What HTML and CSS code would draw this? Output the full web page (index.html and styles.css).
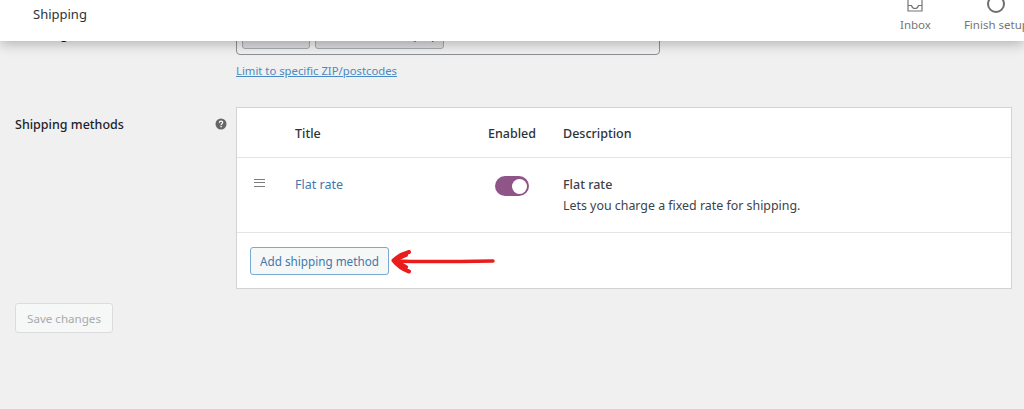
FILE: index.html
```html
<!DOCTYPE html>
<html lang="en">
<head>
<meta charset="utf-8">
<title>Shipping</title>
<link rel="stylesheet" href="styles.css">
</head>
<body>
<header class="topbar">
  <h1 class="page-title">Shipping</h1>
  <nav class="activity">
    <div class="activity-item inbox">
      <svg class="activity-icon" width="16" height="12" viewBox="0 0 16 12"><path d="M1 0V11H15V0M1 5.500H4.500C5 7.500 6 8.500 8 8.500S11 7.500 11.500 5.500H15" fill="none" stroke="#757575" stroke-width="1.200"/></svg>
      <span>Inbox</span>
    </div>
    <div class="activity-item setup">
      <svg class="activity-icon" width="18" height="13" viewBox="0 0 18 13"><circle cx="9" cy="4" r="8" fill="none" stroke="#6f6f6f" stroke-width="2"/></svg>
      <span>Finish setup</span>
    </div>
  </nav>
</header>

<main class="content">
  <section class="region-row">
    <span class="row-label clipped">Zone regions</span>
    <div class="region-col">
      <div class="region-box">
        <span class="chip chip-a"></span>
        <span class="chip chip-b">(US)</span>
      </div>
      <a class="limit-link" href="#">Limit to specific ZIP/postcodes</a>
    </div>
  </section>

  <section class="methods-row">
    <div class="methods-label">
      <span class="row-label">Shipping methods</span>
      <svg class="help" width="12" height="12" viewBox="0 0 12 12"><circle cx="6" cy="6" r="5.500" fill="#666"/><path d="M4.300 4.700C4.400 3.700 5.100 3.200 6 3.200C7 3.200 7.700 3.800 7.700 4.600C7.700 5.700 6.100 5.700 6.100 7" fill="none" stroke="#fff" stroke-width="1.200"/><rect x="5.400" y="7.800" width="1.400" height="1.400" fill="#fff"/></svg>
    </div>
    <div class="methods-table">
      <div class="table-row head">
        <span class="cell-handle"></span>
        <span class="cell-title">Title</span>
        <span class="cell-enabled">Enabled</span>
        <span class="cell-desc">Description</span>
      </div>
      <div class="table-row body-row">
        <span class="cell-handle"><i class="handle"></i></span>
        <a class="cell-title rate-link" href="#">Flat rate</a>
        <span class="cell-enabled"><span class="toggle"><span class="knob"></span></span></span>
        <div class="cell-desc">
          <strong>Flat rate</strong>
          <p>Lets you charge a fixed rate for shipping.</p>
        </div>
      </div>
      <div class="table-foot">
        <button class="add-btn" type="button">Add shipping method</button>
        <svg class="arrow" width="110" height="32" viewBox="0 0 110 32"><path d="M18 7C11 9 6 12 2.500 15.500C6 20 11 24 18 26.500" fill="none" stroke="#ea1c1c" stroke-width="4" stroke-linecap="round" stroke-linejoin="round"/><path d="M5 16C8 18 11 20 15 22M5 15C8 13 11 11 15 10" fill="none" stroke="#ea1c1c" stroke-width="4" stroke-linecap="round"/><path d="M4 16C30 17 70 16.500 102 16" fill="none" stroke="#ea1c1c" stroke-width="3.500" stroke-linecap="round"/></svg>
      </div>
    </div>
  </section>

  <button class="save-btn" type="button" disabled>Save changes</button>
</main>
</body>
</html>
```

FILE: styles.css
```css
* { box-sizing: border-box; }

html, body {
  margin: 0;
  height: 409px;
  overflow: hidden;
}

body {
  background: #f0f0f1;
  color: #3c434a;
  font-family: "Noto Sans", "Open Sans", sans-serif;
  font-size: 12.5px;
}

.topbar {
  position: absolute;
  top: 0;
  left: 0;
  width: 1024px;
  height: 41px;
  background: #fff;
  box-shadow: 0 3px 12px rgba(0, 0, 0, 0.26);
  display: flex;
  justify-content: space-between;
  z-index: 2;
}

.page-title {
  margin: 5px 0 0 33px;
  font-size: 13px;
  line-height: 18px;
  font-weight: 400;
  color: #2c3338;
}

.activity {
  display: flex;
  gap: 33px;
  width: 124px;
  flex: none;
  color: #757575;
  font-size: 11.500px;
  overflow: hidden;
  height: 41px;
}

.activity-item {
  display: flex;
  flex-direction: column;
  align-items: center;
  white-space: nowrap;
}

.activity-icon { display: block; flex: none; }

.activity-item span { margin-top: 5px; line-height: 16px; }
.setup span { margin-top: 4px; }

.content {
  padding: 26px 0 0 15px;
}

.region-row {
  display: flex;
}

.row-label {
  font-weight: 500;
  color: #1d2327;
  width: 200px;
  flex: none;
}

.clipped { line-height: 18px; }

.region-col { margin-left: 21px; }

.region-box {
  width: 424px;
  height: 29px;
  border: 1px solid #8c8f94;
  border-radius: 4px;
  padding: 0 0 0 5px;
  display: flex;
  gap: 5px;
}

.chip {
  height: 22px;
  border: 1px solid #a7aaad;
  border-radius: 3px;
  background: #dcdcde;
  font-size: 12px;
  line-height: 16px;
  text-align: right;
  padding-right: 8px;
}

.chip-a { width: 68px; }
.chip-b { width: 129px; }

.limit-link {
  display: block;
  margin-top: 7px;
  color: #4a8ac4;
  font-size: 11.300px;
  line-height: 18px;
}

.methods-row {
  display: flex;
  margin-top: 27px;
}

.methods-label {
  width: 221px;
  flex: none;
  display: flex;
  justify-content: space-between;
  padding: 9px 11px 0 0;
}

.methods-label .row-label { line-height: 18px; }
.help { margin-top: 2px; flex: none; }

.methods-table {
  width: 776px;
  height: 182px;
  border: 1px solid #d3d3d6;
  background: #fff;
  color: #3c434a;
}

.table-row {
  display: flex;
  border-bottom: 1px solid #e2e4e7;
}

.head {
  height: 50px;
  padding-top: 2px;
  align-items: center;
  font-weight: 500;
  color: #2c3338;
}

.body-row {
  height: 75px;
  padding-top: 18px;
  align-items: flex-start;
}

.cell-handle { width: 58px; flex: none; padding-left: 17px; }
.cell-title { width: 193px; flex: none; }
.cell-enabled { width: 75px; flex: none; }
.cell-desc { flex: 1; }

.handle {
  display: block;
  width: 11px;
  height: 8px;
  margin-top: 3px;
  border-top: 1px solid #7c7c7c;
  border-bottom: 1px solid #7c7c7c;
  background: linear-gradient(#7c7c7c, #7c7c7c) center / 100% 1.400px no-repeat;
}

.rate-link { color: #3f78ae; text-decoration: none; line-height: 18px; }

.toggle {
  display: block;
  width: 34px;
  height: 20px;
  margin: 0 0 0 7px;
  border-radius: 10px;
  background: #8f5588;
  position: relative;
}

.knob {
  position: absolute;
  right: 2px;
  top: 2.500px;
  width: 15px;
  height: 15px;
  border-radius: 50%;
  background: #fff;
}

.cell-desc strong { font-weight: 500; line-height: 18px; display: block; }
.cell-desc p { margin: 3px 0 0; line-height: 18px; font-size: 12.400px; }

.table-foot {
  display: flex;
  align-items: center;
  gap: 2px;
  height: 55px;
  padding: 0 0 0 13px;
}

.add-btn {
  width: 139px;
  height: 28px;
  border: 1px solid #7aa9d2;
  border-radius: 3px;
  background: #f6f7f7;
  color: #3f78ae;
  font: inherit;
  font-size: 11.700px;
  padding: 0;
}

.arrow { flex: none; }

.save-btn {
  display: block;
  width: 98px;
  height: 30px;
  margin-top: 14px;
  border: 1px solid #dcdcde;
  border-radius: 3px;
  background: #f6f7f7;
  color: #a7aaad;
  font: inherit;
  font-size: 11.600px;
  padding: 0;
}
```
